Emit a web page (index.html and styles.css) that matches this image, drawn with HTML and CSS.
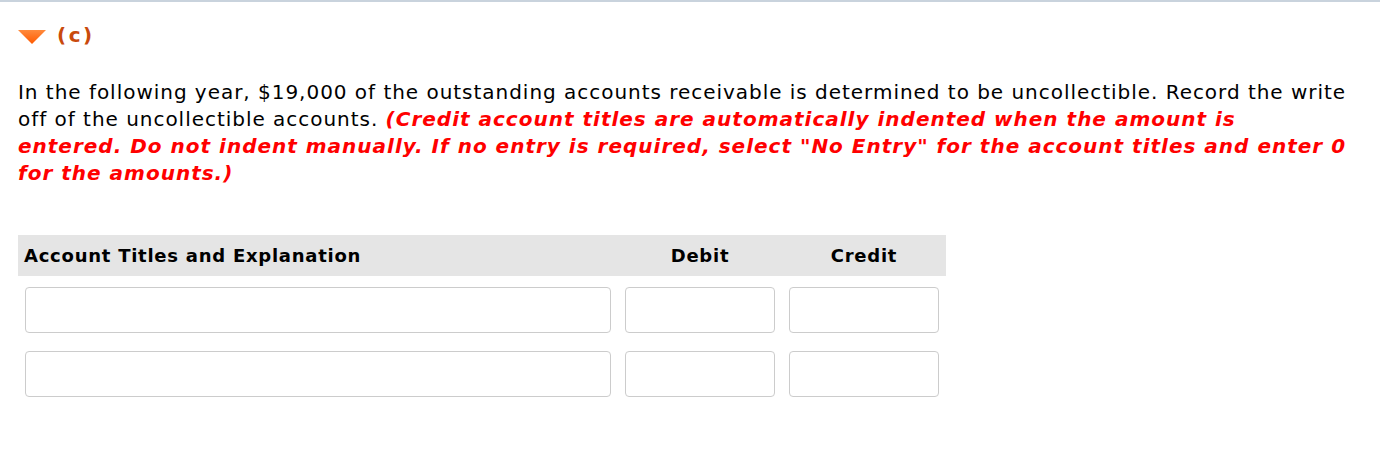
FILE: index.html
```html
<!DOCTYPE html>
<html>
<head>
<meta charset="utf-8">
<link rel="stylesheet" href="styles.css">
</head>
<body>
<div class="topline"></div>
<div class="part">
  <div class="part-head">
    <svg class="caret" width="28" height="14" viewBox="0 0 28 14">
      <defs>
        <linearGradient id="g" x1="0" y1="0" x2="0" y2="1">
          <stop offset="0" stop-color="#ff8a3d"/>
          <stop offset="1" stop-color="#ff5a00"/>
        </linearGradient>
      </defs>
      <polygon points="0,0 28,0 14,14" fill="url(#g)"/>
    </svg>
    <span class="part-label">(c)</span>
  </div>
  <p class="question">In the following year, $19,000 of the outstanding accounts receivable is determined to be uncollectible. Record the write off of the uncollectible accounts. <em class="note">(Credit account titles are automatically indented when the amount is<br>entered. Do not indent manually. If no entry is required, select "No Entry" for the account titles and enter 0 for the amounts.)</em></p>
  <div class="journal">
    <div class="jhead">
      <div class="hc hc-title">Account Titles and Explanation</div>
      <div class="hc hc-num">Debit</div>
      <div class="hc hc-num">Credit</div>
    </div>
    <div class="jrow">
      <div class="cell"><input class="field" type="text"></div>
      <div class="cell"><input class="field" type="text"></div>
      <div class="cell"><input class="field" type="text"></div>
    </div>
    <div class="jrow">
      <div class="cell"><input class="field" type="text"></div>
      <div class="cell"><input class="field" type="text"></div>
      <div class="cell"><input class="field" type="text"></div>
    </div>
  </div>
</div>
</body>
</html>
```
FILE: styles.css
```css
html, body {
  margin: 0;
  padding: 0;
  background: #ffffff;
}
body {
  font-family: "DejaVu Sans", Verdana, sans-serif;
  color: #000;
}
.topline {
  height: 2px;
  background: #c9d3dd;
}
.part {
  padding: 0 18px;
}
.part-head {
  display: flex;
  align-items: center;
  gap: 11px;
  height: 30px;
  margin-top: 18px;
}
.caret {
  display: block;
  margin-top: 3px;
}
.part-label {
  font-weight: bold;
  font-size: 20px;
  letter-spacing: 2.5px;
  color: #c94a0c;
}
.question {
  margin: 29px 0 0 0;
  font-size: 20px;
  line-height: 27px;
  letter-spacing: 0.97px;
  width: 1340px;
}
.note {
  color: #ff0000;
  font-weight: bold;
  font-style: italic;
  letter-spacing: 1px;
}
.journal {
  margin-top: 48px;
  width: 928px;
}
.jhead {
  display: grid;
  grid-template-columns: 600px 164px 164px;
  background: #e5e5e5;
  height: 41px;
  align-items: center;
  margin-bottom: 2px;
}
.hc {
  font-weight: bold;
  font-size: 18px;
  letter-spacing: 0.75px;
}
.hc-title {
  padding-left: 6px;
}
.hc-num {
  text-align: center;
}
.jrow {
  display: grid;
  grid-template-columns: 600px 164px 164px;
  padding: 9px 0;
}
.cell {
  padding: 0 7px;
}
.field {
  display: block;
  box-sizing: border-box;
  width: 100%;
  height: 46px;
  margin: 0;
  border: 1px solid #cccccc;
  border-radius: 4px;
  background: #fff;
  outline: none;
}
```
